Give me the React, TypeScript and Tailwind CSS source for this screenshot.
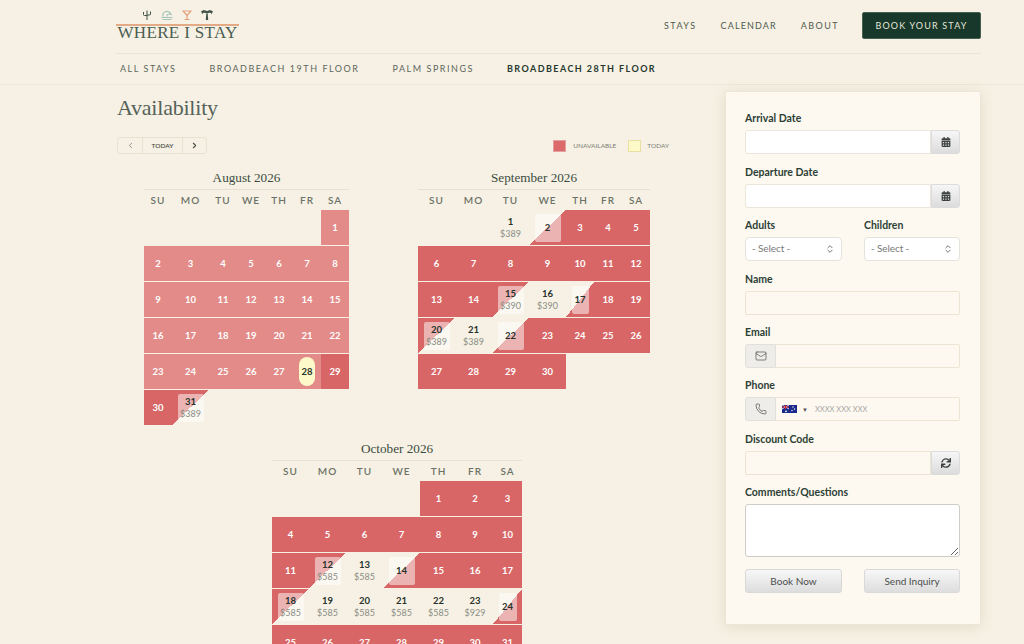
import { ChevronLeft, ChevronRight, ChevronsUpDown, Mail, Phone } from "lucide-react";
import { FaCalendarAlt, FaSync } from "react-icons/fa";

type Kind = "past" | "red" | "free" | "out" | "in" | "today";
type Day = { d: number; kind: Kind; price?: string };

interface Month {
  title: string;
  width: string;
  cols: string;
  offset: number;
  days: Day[];
}

// expand "from..to" runs of one kind into day cells
function run(from: number, to: number, kind: Kind, price?: string): Day[] {
  const out: Day[] = [];
  for (let d = from; d <= to; d++) out.push({ d, kind, price });
  return out;
}

const months: Month[] = [
  {
    title: "August 2026",
    width: "w-[205px]",
    cols: "grid-cols-[28px_37px_28px_28px_28px_28px_28px]",
    offset: 6,
    days: [
      ...run(1, 27, "past"),
      { d: 28, kind: "today" },
      ...run(29, 30, "red"),
      { d: 31, kind: "out", price: "$389" },
    ],
  },
  {
    title: "September 2026",
    width: "w-[232px]",
    cols: "grid-cols-[37px_37px_37px_37px_28px_28px_28px]",
    offset: 2,
    days: [
      { d: 1, kind: "free", price: "$389" },
      { d: 2, kind: "in" },
      ...run(3, 14, "red"),
      { d: 15, kind: "out", price: "$390" },
      { d: 16, kind: "free", price: "$390" },
      { d: 17, kind: "in" },
      ...run(18, 19, "red"),
      { d: 20, kind: "out", price: "$389" },
      { d: 21, kind: "free", price: "$389" },
      { d: 22, kind: "in" },
      ...run(23, 30, "red"),
    ],
  },
  {
    title: "October 2026",
    width: "w-[250px]",
    cols: "grid-cols-[37px_37px_37px_37px_37px_36px_29px]",
    offset: 4,
    days: [
      ...run(1, 11, "red"),
      { d: 12, kind: "out", price: "$585" },
      { d: 13, kind: "free", price: "$585" },
      { d: 14, kind: "in" },
      ...run(15, 17, "red"),
      { d: 18, kind: "out", price: "$585" },
      ...run(19, 22, "free", "$585"),
      { d: 23, kind: "free", price: "$929" },
      { d: 24, kind: "in" },
      ...run(25, 31, "red"),
    ],
  },
];

const weekdays = ["SU", "MO", "TU", "WE", "TH", "FR", "SA"];

function DayLabel({ day, light }: { day: Day; light?: boolean }) {
  return (
    <>
      <span className={`text-[9.5px] font-bold leading-[12px] ${light ? "text-white" : "text-[#27332b]"}`}>{day.d}</span>
      {day.price && <span className="text-[9px] leading-[12px] text-[#8a8d84]">{day.price}</span>}
    </>
  );
}

function DayCell({ day }: { day: Day }) {
  if (day.kind === "past" || day.kind === "red") {
    return (
      <div className={`h-[35px] flex items-center justify-center ${day.kind === "past" ? "bg-[#e28b88]" : "bg-[#d86666]"}`}>
        <DayLabel day={day} light />
      </div>
    );
  }
  if (day.kind === "today") {
    return (
      <div className="h-[35px] px-[6px] py-[3px] bg-[#e28b88]">
        <div className="h-full rounded-[8px] bg-[#fdf9c8] flex items-center justify-center">
          <DayLabel day={day} />
        </div>
      </div>
    );
  }
  if (day.kind === "free") {
    return (
      <div className="h-[35px] flex flex-col items-center justify-center">
        <DayLabel day={day} />
      </div>
    );
  }
  // half days: split on the diagonal, with a see-through white box on top
  const split =
    day.kind === "out"
      ? "bg-[linear-gradient(to_bottom_right,#d86666_50%,#f6f1e4_50%)]"
      : "bg-[linear-gradient(to_bottom_right,#f6f1e4_50%,#d86666_50%)]";
  return (
    <div className={`h-[35px] px-[5.5px] py-[3.5px] ${split}`}>
      <div className="h-full rounded-[2px] bg-white/50 flex flex-col items-center justify-center">
        <DayLabel day={day} />
      </div>
    </div>
  );
}

function MonthTable({ month }: { month: Month }) {
  return (
    <div className={month.width}>
      <h3 className="h-[20px] border-b border-[#e5e1d4] text-center text-[13.2px] leading-[16px] text-[#3c4c40] font-['Liberation_Serif',serif]">
        {month.title}
      </h3>
      <div className={`grid ${month.cols} h-[20px] items-center`}>
        {weekdays.map((w) => (
          <div key={w} className="text-center text-[10px] font-semibold tracking-[0.1em] text-[#6d7268]">
            {w}
          </div>
        ))}
      </div>
      <div className={`grid ${month.cols} gap-y-px`}>
        {Array.from({ length: month.offset }).map((_, i) => (
          <div key={i} />
        ))}
        {month.days.map((day) => (
          <DayCell key={day.d} day={day} />
        ))}
      </div>
    </div>
  );
}

function Logo() {
  return (
    <div className="w-[123px] mb-[2px]">
      <div className="h-[15px] flex justify-center items-end gap-[9px] pb-[4px]">
        <svg width="10" height="10" viewBox="0 0 10 10" fill="none" stroke="#3f5246" strokeWidth="1">
          <path d="M5 10V0.5M1.5 2v2.5a1 1 0 0 0 1 1h2.5M8.5 1.5V4a1 1 0 0 1-1 1H5" />
        </svg>
        <svg width="12" height="10" viewBox="0 0 12 10" fill="none" stroke="#a3c4b8" strokeWidth="1.2">
          <path d="M2 6.5a4 4 0 0 1 8-2c-2-1-4-.5-4 2M0.5 7.5h11M1.5 9.5h9" />
        </svg>
        <svg width="10" height="10" viewBox="0 0 10 10" fill="none" stroke="#e2a27c" strokeWidth="1.2">
          <path d="M1 1h8L5 5.5zM5 5.5v4M2.5 9.5h5" />
        </svg>
        <svg width="12" height="10" viewBox="0 0 12 10" fill="#3f5246">
          <path d="M5.3 3.5h1.4l.5 6.5H4.8z" />
          <path d="M6 3.6C4.5 2.4 2.5 2.2 1 4.2 1 2.2.2 2 0 1.6 2-.2 4.6 0 6 1.2 7.4 0 10-.2 12 1.6c-.2.4-1 .6-1 2.6C9.5 2.2 7.5 2.4 6 3.6z" />
        </svg>
      </div>
      <div className="h-[1.5px] bg-[#e4a985]" />
      <div className="text-center text-[17px] leading-[14px] tracking-[0.02em] text-[#4a5e52] whitespace-nowrap font-['Liberation_Serif',serif]">
        WHERE I STAY
      </div>
    </div>
  );
}

function Field({ label, children }: { label: string; children: React.ReactNode }) {
  return (
    <div>
      <label className="block h-[12px] mb-[6px] text-[10.5px] leading-[12px] font-bold text-[#2c3f35]">{label}</label>
      {children}
    </div>
  );
}

const addonButton =
  "w-[29px] shrink-0 flex items-center justify-center text-[#3d4240] rounded-r-[3px] border border-[#dcdcdc] bg-[linear-gradient(#f6f6f6,#dcdcdc)]";
const addonLeft =
  "w-[31px] shrink-0 flex items-center justify-center text-[#555] rounded-l-[3px] border border-[#e2e0da] bg-[#eeede9]";

function SelectBox() {
  return (
    <div className="h-[24px] px-[6px] pb-[1px] rounded-[4px] border border-[#e6e3dc] bg-white flex items-center justify-between">
      <span className="text-[10px] tracking-[-0.01em] text-[#77797a]">- Select -</span>
      <ChevronsUpDown size={10} strokeWidth={2} className="text-[#55585a]" />
    </div>
  );
}

function BigButton({ children }: { children: React.ReactNode }) {
  return (
    <button className="h-[24px] rounded-[3px] border border-[#d8d8d6] bg-[linear-gradient(#f7f7f7,#dddddd)] text-[10px] text-[#4b4e4c]">
      {children}
    </button>
  );
}

export default function App() {
  return (
    <div className="h-[644px] overflow-hidden bg-[#f6f1e4] font-['Lato',sans-serif]">
      {/* Header */}
      <header className="border-b border-[#ebe6d8] pl-[116px] pr-[43px]">
        <div className="h-[54px] pb-[2px] border-b border-[#e9e4d6] flex items-center justify-between">
          <Logo />
          <nav className="flex items-center text-[9px] text-[#4f5a50]">
            <a className="mr-[24px] tracking-[0.16em]">STAYS</a>
            <a className="mr-[24px] tracking-[0.125em]">CALENDAR</a>
            <a className="mr-[23px] tracking-[0.16em]">ABOUT</a>
            <a className="h-[27px] w-[119px] flex items-center justify-center rounded-[2px] border border-[#46604f] bg-[#17382b] tracking-[0.13em] text-[#e6e6d8]">
              BOOK YOUR STAY
            </a>
          </nav>
        </div>
        <div className="h-[30px] pl-[4px] flex items-center gap-[33px] text-[9px] tracking-[0.17em] text-[#5d665c]">
          <a>ALL STAYS</a>
          <a>BROADBEACH 19TH FLOOR</a>
          <a>PALM SPRINGS</a>
          <a className="font-bold tracking-[0.16em] text-[#27382e]">BROADBEACH 28TH FLOOR</a>
        </div>
      </header>

      <main className="flex pl-[116px] pr-[43px] pt-[6px]">
        {/* Calendars */}
        <section className="w-[609px] pt-[5px]">
          <h1 className="pl-[1px] h-[24px] text-[22px] leading-[24px] tracking-[-0.01em] text-[#55625a] font-['Liberation_Serif',serif]">
            Availability
          </h1>
          <div className="mt-[17px] ml-[1px] w-[552px] h-[17px] flex items-center justify-between">
            <div className="flex h-[17px] rounded-[3px] border border-[#e8e2d0] text-[#4b4f48]">
              <button className="w-[25px] flex items-center justify-center border-r border-[#e8e2d0] text-[#8d8f87]">
                <ChevronLeft size={9} strokeWidth={2.5} />
              </button>
              <button className="w-[40px] text-[6.5px] font-semibold border-r border-[#e8e2d0]">TODAY</button>
              <button className="w-[23px] flex items-center justify-center">
                <ChevronRight size={9} strokeWidth={3} />
              </button>
            </div>
            <div className="flex items-center text-[6.5px] text-[#7b7e74]">
              <span className="w-[13px] h-[12px] mr-[7px] bg-[#dc6a6a] border border-[#e3a0a0]" />
              <span className="mr-[12px]">UNAVAILABLE</span>
              <span className="w-[13px] h-[12px] mr-[6px] bg-[#fdf9c8] border border-[#e8dfa0]" />
              <span>TODAY</span>
            </div>
          </div>
          <div className="mt-[16px] w-[562px] flex flex-wrap justify-center gap-x-[69px] gap-y-[16px]">
            {months.map((m) => (
              <MonthTable key={m.title} month={m} />
            ))}
          </div>
        </section>

        {/* Booking form */}
        <aside className="w-[256px] h-[534px] shrink-0 rounded-[2px] border border-[#ece6d6] bg-[#fdf8f0] pl-[19px] pr-[20px] pt-[20.3px] shadow-[0_2px_14px_rgba(120,100,60,0.14)]">
          <div className="flex flex-col gap-[11.43px]">
            <Field label="Arrival Date">
              <div className="flex h-[24px]">
                <input className="flex-1 min-w-0 rounded-l-[3px] border border-[#ebe6d9] bg-white" />
                <div className={addonButton}>
                  <FaCalendarAlt size={10} />
                </div>
              </div>
            </Field>
            <Field label="Departure Date">
              <div className="flex h-[24px]">
                <input className="flex-1 min-w-0 rounded-l-[3px] border border-[#ebe6d9] bg-white" />
                <div className={addonButton}>
                  <FaCalendarAlt size={10} />
                </div>
              </div>
            </Field>
            <div className="grid grid-cols-[97px_96px] justify-between">
              <Field label="Adults">
                <SelectBox />
              </Field>
              <Field label="Children">
                <SelectBox />
              </Field>
            </div>
            <Field label="Name">
              <input className="block w-full h-[24px] rounded-[2px] border border-[#ebe5d3] bg-[#fdf8f0]" />
            </Field>
            <Field label="Email">
              <div className="flex h-[24px]">
                <div className={addonLeft}>
                  <Mail size={12} strokeWidth={1.5} />
                </div>
                <input className="flex-1 min-w-0 rounded-r-[2px] border border-l-0 border-[#ebe5d3] bg-[#fdf8f0]" />
              </div>
            </Field>
            <Field label="Phone">
              <div className="flex h-[24px]">
                <div className={addonLeft}>
                  <Phone size={12} strokeWidth={1.5} />
                </div>
                <div className="flex-1 min-w-0 flex items-center pl-[6px] rounded-r-[2px] border border-l-0 border-[#ebe5d3] bg-[#fdf8f0]">
                  <svg width="15" height="8" viewBox="0 0 15 8" className="shrink-0">
                    <rect width="15" height="8" fill="#1a2a8c" />
                    <path d="M0 0l7 4M7 0L0 4" stroke="#fff" strokeWidth="0.8" />
                    <path d="M3.5 0v4M0 2h7" stroke="#d8232a" strokeWidth="1" />
                    <circle cx="11" cy="2" r="0.7" fill="#fff" />
                    <circle cx="12.5" cy="4" r="0.7" fill="#fff" />
                    <circle cx="10" cy="5.5" r="0.7" fill="#fff" />
                    <circle cx="4" cy="6.3" r="0.9" fill="#fff" />
                  </svg>
                  <span className="ml-[5px] mr-[7px] text-[6px] text-[#555]">▼</span>
                  <input
                    placeholder="XXXX XXX XXX"
                    className="flex-1 min-w-0 bg-transparent text-[7.5px] placeholder:text-[#a9a9a4] outline-none"
                  />
                </div>
              </div>
            </Field>
            <Field label="Discount Code">
              <div className="flex h-[24px]">
                <input className="flex-1 min-w-0 rounded-l-[2px] border border-[#ebe5d3] bg-[#fdf8f0]" />
                <div className={addonButton}>
                  <FaSync size={10} />
                </div>
              </div>
            </Field>
            <Field label="Comments/Questions">
              <textarea className="block w-full h-[53px] rounded-[3px] border border-[#cfcdc8] bg-white" />
            </Field>
          </div>
          <div className="mt-[12px] grid grid-cols-[97px_96px] justify-between">
            <BigButton>Book Now</BigButton>
            <BigButton>Send Inquiry</BigButton>
          </div>
        </aside>
      </main>
    </div>
  );
}
